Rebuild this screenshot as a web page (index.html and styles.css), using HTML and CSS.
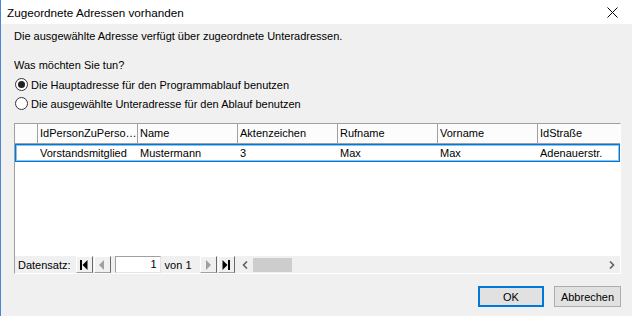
FILE: index.html
```html
<!DOCTYPE html>
<html lang="de">
<head>
<meta charset="utf-8">
<link rel="stylesheet" href="styles.css">
</head>
<body>
<div class="window">
  <div class="titlebar">
    <span class="title">Zugeordnete Adressen vorhanden</span>
    <svg class="close" width="11" height="11" viewBox="0 0 11 11"><path d="M0.5 0.5 L10.5 10.5 M10.5 0.5 L0.5 10.5" stroke="#000" stroke-width="1" fill="none"/></svg>
  </div>
  <div class="content">
    <p class="msg">Die ausgewählte Adresse verfügt über zugeordnete Unteradressen.</p>
    <p class="question">Was möchten Sie tun?</p>
    <div class="radio"><span class="circle checked"></span><span>Die Hauptadresse für den Programmablauf benutzen</span></div>
    <div class="radio"><span class="circle"></span><span>Die ausgewählte Unteradresse für den Ablauf benutzen</span></div>
    <div class="grid">
      <div class="row hdr">
        <div class="cell rh"></div>
        <div class="cell">IdPersonZuPerso…</div>
        <div class="cell">Name</div>
        <div class="cell">Aktenzeichen</div>
        <div class="cell">Rufname</div>
        <div class="cell">Vorname</div>
        <div class="cell last">IdStraße</div>
      </div>
      <div class="row data">
        <div class="cell rh"></div>
        <div class="cell">Vorstandsmitglied</div>
        <div class="cell">Mustermann</div>
        <div class="cell">3</div>
        <div class="cell">Max</div>
        <div class="cell">Max</div>
        <div class="cell last">Adenauerstr.</div>
      </div>
      <div class="empty"></div>
      <div class="nav">
        <span class="navlabel">Datensatz:</span>
        <span class="nbtn"><svg width="10" height="10" viewBox="0 0 10 10"><rect x="1" y="0" width="2" height="10" fill="#000"/><path d="M8.5 0 L3.5 5 L8.5 10 Z" fill="#000"/></svg></span>
        <span class="nbtn"><svg width="10" height="10" viewBox="0 0 10 10"><path d="M7 0 L2 5 L7 10 Z" fill="#a0a0a0"/></svg></span>
        <span class="tbox">1</span>
        <span class="von">von 1</span>
        <span class="nbtn"><svg width="10" height="10" viewBox="0 0 10 10"><path d="M3 0 L8 5 L3 10 Z" fill="#a0a0a0"/></svg></span>
        <span class="nbtn"><svg width="10" height="10" viewBox="0 0 10 10"><path d="M1.5 0 L6.5 5 L1.5 10 Z" fill="#000"/><rect x="7" y="0" width="2" height="10" fill="#000"/></svg></span>
        <div class="hscroll">
          <svg class="arr" width="7" height="8" viewBox="0 0 7 8"><path d="M5 0.5 L1.5 4 L5 7.5" stroke="#606060" stroke-width="1.6" fill="none"/></svg>
          <span class="thumb"></span>
          <span class="track"></span>
          <svg class="arr" width="7" height="8" viewBox="0 0 7 8"><path d="M2 0.5 L5.5 4 L2 7.5" stroke="#606060" stroke-width="1.6" fill="none"/></svg>
        </div>
      </div>
    </div>
    <div class="buttons">
      <span class="btn default">OK</span>
      <span class="btn">Abbrechen</span>
    </div>
  </div>
</div>
</body>
</html>
```

FILE: styles.css
```css
html, body {
  margin: 0;
  padding: 0;
}
body {
  width: 632px;
  height: 316px;
  overflow: hidden;
  background: #f0f0f0;
  font-family: "Liberation Sans", Arial, sans-serif;
  font-size: 11px;
  color: #000;
}
.window {
  height: 316px;
  border-left: 1px solid #4a86d4;
  display: flex;
  flex-direction: column;
}
.titlebar {
  height: 24px;
  background: #fff;
  display: flex;
  align-items: center;
  padding-left: 6px;
  padding-right: 14px;
}
.title {
  flex: 1;
  font-size: 11.7px;
}
.close {
  display: block;
}
.content {
  flex: 1;
  display: flex;
  flex-direction: column;
  padding: 5px 11px 0 13px;
}
.msg, .question {
  margin: 0;
  line-height: 14px;
}
.question {
  margin-top: 15px;
}
.radio {
  display: flex;
  align-items: center;
  height: 19px;
}
.radio:first-of-type {
  margin-top: 3px;
}
.circle {
  width: 11px;
  height: 11px;
  border: 1px solid #333;
  border-radius: 50%;
  background: #fff;
  margin-left: 1px;
  margin-right: 3px;
  display: flex;
  align-items: center;
  justify-content: center;
  flex: none;
}
.circle.checked::after {
  content: "";
  width: 7px;
  height: 7px;
  border-radius: 50%;
  background: #222;
}
.grid {
  margin-top: 10px;
  height: 151px;
  box-sizing: border-box;
  border-top: 1px solid #a0a0a0;
  border-left: 1px solid #a0a0a0;
  border-right: 1px solid #fff;
  border-bottom: 1px solid #fff;
  background: #fff;
  display: flex;
  flex-direction: column;
  flex: none;
}
.row {
  display: flex;
  flex: none;
}
.cell {
  width: 100px;
  box-sizing: border-box;
  padding-left: 2px;
  white-space: nowrap;
  overflow: hidden;
}
.cell.rh {
  width: 23px;
}
.cell.last {
  flex: 1;
}
.hdr {
  height: 20px;
  border-bottom: 1px solid #a0a0a0;
  box-sizing: border-box;
  background: #fcfcfc;
}
.hdr .cell {
  border-right: 1px solid #a0a0a0;
  line-height: 19px;
}
.hdr .cell.last {
  border-right: none;
}
.data {
  height: 18px;
  box-sizing: border-box;
  border: 1px solid #0078d7;
  box-shadow: inset 0 0 0 1px #8cc2ee;
}
.data .cell {
  line-height: 16px;
}
.data .cell.rh {
  width: 22px;
}
.empty {
  flex: 1;
}
.nav {
  height: 17px;
  flex: none;
  background: #f0f0f0;
  display: flex;
  align-items: center;
  padding-left: 3px;
}
.navlabel {
  margin-right: 5px;
}
.nbtn {
  width: 17px;
  height: 17px;
  box-sizing: border-box;
  background: #f0f0f0;
  border-top: 1px solid #fff;
  border-left: 1px solid #fff;
  border-right: 1px solid #696969;
  border-bottom: 1px solid #a0a0a0;
  display: flex;
  align-items: center;
  justify-content: center;
  margin-right: 1px;
}
.tbox {
  width: 46px;
  height: 17px;
  box-sizing: border-box;
  background: #fff;
  border: 1px solid #a0a0a0;
  border-bottom-color: #e3e3e3;
  border-right-color: #e3e3e3;
  text-align: right;
  padding-right: 3px;
  line-height: 15px;
  margin-left: 3px;
  margin-right: 4px;
}
.von {
  width: 35px;
}
.hscroll {
  flex: 1;
  display: flex;
  align-items: center;
  height: 17px;
  margin-left: 5px;
}
.arr {
  display: block;
  margin: 0 4px 0 1px;
}
.hscroll .arr:last-child {
  margin: 0 5px 0 4px;
}
.thumb {
  width: 39px;
  height: 14px;
  background: #cdcdcd;
}
.track {
  flex: 1;
}
.buttons {
  display: flex;
  justify-content: flex-end;
  gap: 10px;
  margin-top: 12px;
}
.btn {
  width: 67px;
  height: 21px;
  box-sizing: border-box;
  background: #e1e1e1;
  border: 1px solid #adadad;
  display: flex;
  align-items: center;
  justify-content: center;
}
.btn.default {
  width: 66px;
  border: 2px solid #0078d7;
}
```
